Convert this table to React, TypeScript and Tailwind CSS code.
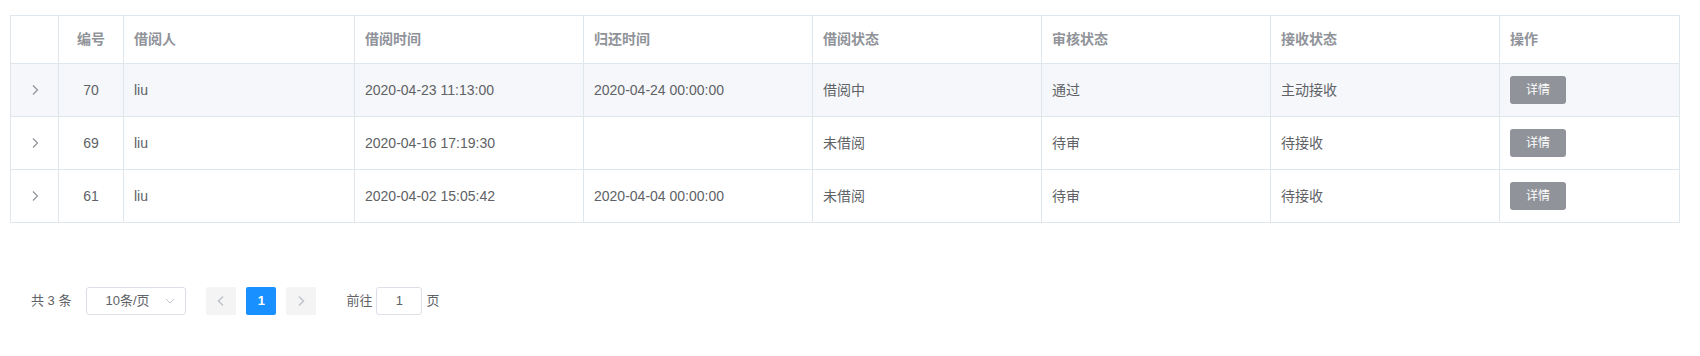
import { type ReactNode } from "react";

type Loan = {
	id: number;
	user: string;
	borrowedAt: string;
	returnAt: string;
	loanStatus: string;
	reviewStatus: string;
	receiveStatus: string;
};

const rows: Loan[] = [
	{
		id: 70,
		user: "liu",
		borrowedAt: "2020-04-23 11:13:00",
		returnAt: "2020-04-24 00:00:00",
		loanStatus: "借阅中",
		reviewStatus: "通过",
		receiveStatus: "主动接收",
	},
	{
		id: 69,
		user: "liu",
		borrowedAt: "2020-04-16 17:19:30",
		returnAt: "",
		loanStatus: "未借阅",
		reviewStatus: "待审",
		receiveStatus: "待接收",
	},
	{
		id: 61,
		user: "liu",
		borrowedAt: "2020-04-02 15:05:42",
		returnAt: "2020-04-04 00:00:00",
		loanStatus: "未借阅",
		reviewStatus: "待审",
		receiveStatus: "待接收",
	},
];

const headers = [
	"借阅人",
	"借阅时间",
	"归还时间",
	"借阅状态",
	"审核状态",
	"接收状态",
	"操作",
];

const gridCols =
	"grid grid-cols-[48px_65px_231px_229px_229px_229px_229px_229px_180px]";

function Cell({
	children,
	center,
	className = "",
}: {
	children?: ReactNode;
	center?: boolean;
	className?: string;
}) {
	return (
		<div
			className={`flex items-center border-r border-b border-[#dfe6ec] px-[10px] ${
				center ? "justify-center" : ""
			} ${className}`}
		>
			{children}
		</div>
	);
}

function Chevron({
	dir,
	width = 1.6,
	className = "",
}: {
	dir: "left" | "right";
	width?: number;
	className?: string;
}) {
	return (
		<svg
			width="8"
			height="12"
			viewBox="0 0 8 12"
			fill="none"
			className={className}
		>
			<path
				d={dir === "right" ? "M2 1.5 L6.5 6 L2 10.5" : "M6 1.5 L1.5 6 L6 10.5"}
				stroke="currentColor"
				strokeWidth={width}
			/>
		</svg>
	);
}

export default function App() {
	return (
		<div
			className="min-h-[356px] bg-white pt-[15px] pl-[10px] text-[#606266]"
			style={{
				fontFamily:
					'"Liberation Sans", Arial, "Noto Sans CJK SC", sans-serif',
			}}
		>
			<div className="w-[1670px] border-t border-l border-[#dfe6ec] text-[14px]">
				<div className={`${gridCols} h-[48px] font-bold text-[#909399]`}>
					<Cell />
					<Cell center>编号</Cell>
					{headers.map((h) => (
						<Cell key={h}>{h}</Cell>
					))}
				</div>
				{rows.map((r, i) => (
					<div
						key={r.id}
						className={`${gridCols} h-[53px] ${i === 0 ? "bg-[#f5f7fa]" : ""}`}
					>
						<Cell center>
							<Chevron dir="right" width={1.2} className="text-[#909399]" />
						</Cell>
						<Cell center>{r.id}</Cell>
						<Cell>{r.user}</Cell>
						<Cell>{r.borrowedAt}</Cell>
						<Cell>{r.returnAt}</Cell>
						<Cell>{r.loanStatus}</Cell>
						<Cell>{r.reviewStatus}</Cell>
						<Cell>{r.receiveStatus}</Cell>
						<Cell>
							<button
								type="button"
								className="flex h-[28px] w-[56px] items-center justify-center rounded-[3px] bg-[#909399] text-[12px] text-white"
							>
								详情
							</button>
						</Cell>
					</div>
				))}
			</div>

			<div className="mt-[64px] flex h-[28px] items-center pl-[21px] text-[13px] text-[#606266]">
				<span>共 3 条</span>
				<div className="ml-[15px] flex h-[28px] w-[100px] items-center justify-between rounded-[3px] border border-[#dcdfe6] pr-[10px] pl-[18px]">
					<span>10条/页</span>
					<svg width="10" height="6" viewBox="0 0 10 6" fill="none">
						<path d="M1 1 L5 5 L9 1" stroke="#c0c4cc" strokeWidth="1" />
					</svg>
				</div>
				<button
					type="button"
					className="ml-[20px] flex h-[28px] w-[30px] items-center justify-center rounded-[2px] bg-[#f4f4f5] text-[#c0c4cc]"
				>
					<Chevron dir="left" />
				</button>
				<button
					type="button"
					className="ml-[10px] flex h-[28px] w-[30px] items-center justify-center rounded-[2px] bg-[#1890ff] font-bold text-white"
				>
					1
				</button>
				<button
					type="button"
					className="ml-[10px] flex h-[28px] w-[30px] items-center justify-center rounded-[2px] bg-[#f4f4f5] text-[#c0c4cc]"
				>
					<Chevron dir="right" />
				</button>
				<span className="ml-[30px]">前往</span>
				<div className="ml-[4px] flex h-[28px] w-[46px] items-center justify-center rounded-[3px] border border-[#dcdfe6]">
					1
				</div>
				<span className="ml-[4px]">页</span>
			</div>
		</div>
	);
}
